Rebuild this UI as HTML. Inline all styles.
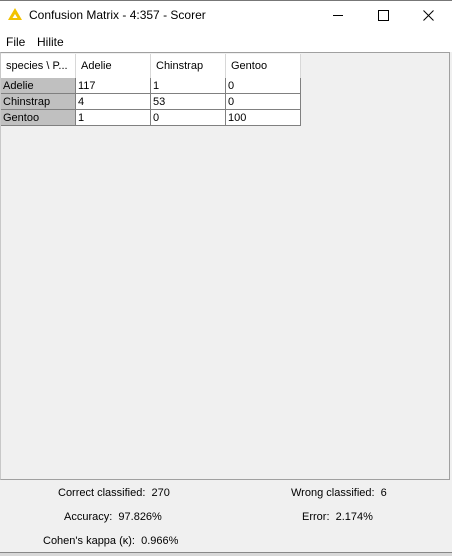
<html><head><style>
body{margin:0;width:452px;height:555px;background:#f0f0f0;font-family:"Liberation Sans",sans-serif;position:relative;overflow:hidden}
.tb{position:absolute;left:0;top:0;width:452px;height:51px;background:#fff;border-top:1px solid #777}
.t{position:absolute;font-size:12px;color:#000;white-space:nowrap}
.panel{position:absolute;left:0;top:52px;width:448px;height:426px;border:1px solid #a0a0a0;border-left:1px solid #c8c8c8;background:#f0f0f0}
.c{position:absolute;height:16px;border-right:1px solid #808080;border-bottom:1px solid #808080;font-size:11px;line-height:16px;padding-left:2px;box-sizing:border-box}
.h{position:absolute;top:1px;height:24px;background:#fff;border-right:1px solid #d8d8d8;font-size:11px;line-height:24px;padding-left:5px;box-sizing:border-box}
.s{position:absolute;font-size:11px;white-space:nowrap}
</style></head><body>
<div class="tb"></div>
<svg style="position:absolute;left:7px;top:7px" width="16" height="14"><polygon points="8,1 15,13 1,13" fill="#f2c200"/><polygon points="8,7 10.5,11 5.5,11" fill="#fff"/></svg>
<div class="t" style="left:29px;top:8px">Confusion Matrix - 4:357 - Scorer</div>
<div style="position:absolute;left:333px;top:15px;width:10px;height:1px;background:#000"></div>
<div style="position:absolute;left:378px;top:10px;width:9px;height:9px;border:1px solid #000"></div>
<svg style="position:absolute;left:423px;top:10px" width="11" height="11"><path d="M0.5 0.5L10.5 10.5M10.5 0.5L0.5 10.5" stroke="#000" stroke-width="1"/></svg>
<div class="t" style="left:6px;top:35px">File</div>
<div class="t" style="left:37px;top:35px">Hilite</div>
<div class="panel">
<div class="h" style="left:0;width:75px">species \ P...</div>
<div class="h" style="left:75px;width:75px">Adelie</div>
<div class="h" style="left:150px;width:75px">Chinstrap</div>
<div class="h" style="left:225px;width:75px">Gentoo</div>
<div style="position:absolute;left:0;top:25px;width:300px;height:48px;background:#fff"></div>
<div class="c" style="left:0;top:25px;width:75px;background:#c0c0c0">Adelie</div>
<div class="c" style="left:75px;top:25px;width:75px">117</div>
<div class="c" style="left:150px;top:25px;width:75px">1</div>
<div class="c" style="left:225px;top:25px;width:75px">0</div>
<div class="c" style="left:0;top:41px;width:75px;background:#c0c0c0">Chinstrap</div>
<div class="c" style="left:75px;top:41px;width:75px">4</div>
<div class="c" style="left:150px;top:41px;width:75px">53</div>
<div class="c" style="left:225px;top:41px;width:75px">0</div>
<div class="c" style="left:0;top:57px;width:75px;background:#c0c0c0">Gentoo</div>
<div class="c" style="left:75px;top:57px;width:75px">1</div>
<div class="c" style="left:150px;top:57px;width:75px">0</div>
<div class="c" style="left:225px;top:57px;width:75px">100</div>
</div>
<div class="s" style="left:58px;top:487px">Correct classified:&nbsp; 270</div>
<div class="s" style="left:291px;top:487px">Wrong classified:&nbsp; 6</div>
<div class="s" style="left:64px;top:511px">Accuracy:&nbsp; 97.826%</div>
<div class="s" style="left:302px;top:511px">Error:&nbsp; 2.174%</div>
<div class="s" style="left:43px;top:535px">Cohen's kappa (κ):&nbsp; 0.966%</div>
<div style="position:absolute;left:0;top:552px;width:452px;height:3px;background:#d8d8d8;border-top:1px solid #888"></div>
</body></html>
